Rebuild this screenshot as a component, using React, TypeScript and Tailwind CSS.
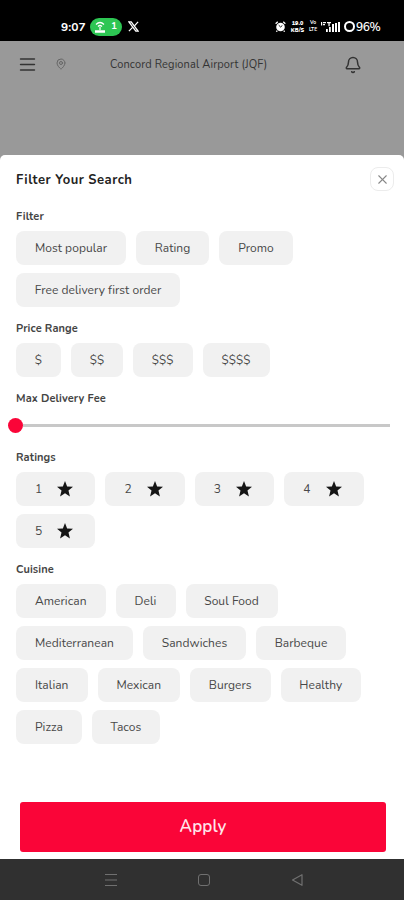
import { Bell, MapPin, Menu, X } from "lucide-react";
import type { ReactNode } from "react";

type Option = { label: string; size: string };

const filters: Option[] = [
  { label: "Most popular", size: "w-[110px]" },
  { label: "Rating", size: "w-[73px]" },
  { label: "Promo", size: "w-[74px]" },
  { label: "Free delivery first order", size: "w-[164px]" },
];

const prices: Option[] = [
  { label: "$", size: "w-[45px]" },
  { label: "$$", size: "w-[52px]" },
  { label: "$$$", size: "w-[59.5px]" },
  { label: "$$$$", size: "w-[67px]" },
];

const cuisines: Option[] = [
  { label: "American", size: "w-[89.5px]" },
  { label: "Deli", size: "w-[60px]" },
  { label: "Soul Food", size: "w-[92px]" },
  { label: "Mediterranean", size: "w-[117px]" },
  { label: "Sandwiches", size: "w-[103px]" },
  { label: "Barbeque", size: "w-[90px]" },
  { label: "Italian", size: "w-[71.5px]" },
  { label: "Mexican", size: "w-[82.5px]" },
  { label: "Burgers", size: "w-[80.5px]" },
  { label: "Healthy", size: "w-[80.5px]" },
  { label: "Pizza", size: "w-[66px]" },
  { label: "Tacos", size: "w-[68px]" },
];

function Star() {
  return (
    <svg viewBox="0 0 24 24" className="size-4 fill-[#151515]">
      <path d="M12 0l3.200 8.300 8.800.5-6.800 5.600 2.200 8.900-7.400-4.900-7.400 4.900 2.200-8.900L0 8.800l8.800-.5z" />
    </svg>
  );
}

function Chip({ size, children }: { size: string; children: ReactNode }) {
  return (
    <button
      className={`${size} flex h-[34px] items-center justify-center rounded-lg bg-[#f1f1f1] text-xs tracking-[0.05px] whitespace-nowrap text-[#484848]`}
    >
      {children}
    </button>
  );
}

function Section({ title, children }: { title: string; children: ReactNode }) {
  return (
    <section>
      <h2 className="flex h-7 items-center pt-px text-[11px] font-bold tracking-[0.1px] text-[#444]">
        {title}
      </h2>
      {children}
    </section>
  );
}

function ChipGroup({ options }: { options: Option[] }) {
  return (
    <div className="flex flex-wrap gap-x-2.5 gap-y-2 pb-2">
      {options.map((o) => (
        <Chip key={o.label} size={o.size}>
          {o.label}
        </Chip>
      ))}
    </div>
  );
}

function StatusBar() {
  return (
    <div className="flex h-[41px] items-center bg-black pt-3 pl-[61px] text-white">
      <span className="w-[29px] text-[12px] font-bold">9:07</span>
      <span className="flex h-[18px] w-8 items-center justify-center gap-1.5 rounded-full bg-[#2dc653] text-[10px] font-bold">
        <svg viewBox="0 0 10 12" className="h-3 w-2.5 fill-none stroke-white">
          <path d="M1 3.5q4-4 8 0M3 5.5q2-2 4 0M5 6v3" strokeWidth="1.2" />
          <path d="M0 10.5h10" strokeWidth="2.5" />
        </svg>
        1
      </span>
      <svg viewBox="0 0 12 12" className="ml-1.5 size-[11px] fill-none stroke-white">
        <path d="M1 1h2.5l7.5 10H8.500z" strokeWidth="1.4" />
        <path d="M11 1L7 5.300M5 7l-4 4" strokeWidth="1.4" />
      </svg>
      <div className="ml-[136px] flex items-center">
        <svg viewBox="0 0 12 12" className="size-[11px]">
          <circle cx="6" cy="6.500" r="4.700" className="fill-white" />
          <path d="M.7 3L3 .9M11.300 3L9 .9M2.500 10.500l-1 1.200M9.500 10.500l1 1.200" stroke="white" strokeWidth="1.400" />
          <path d="M4 4.500l2 2 2-1.500" stroke="black" fill="none" />
        </svg>
        <span className="ml-1 flex w-[15px] flex-col items-center text-[5.5px] leading-[8px] font-black">
          <span className="-mb-px">19.0</span>
          <span>KB/S</span>
        </span>
        <span className="ml-1 flex w-[8px] flex-col items-center text-[5px] leading-[8px] font-bold">
          <span className="-mb-px">Vo</span>
          <span>LTE</span>
        </span>
        <svg viewBox="0 0 20 12" className="ml-1 h-3 w-5 fill-white">
          <path d="M0 1h1.200v3.500H0zM2 1h3v1.200H2zM2 3h2v1.200H2zM6 1h4v1.200H8.700v3H7.400v-3H6zM5 8h1.800v3H5zM8 6h1.800v5H8zM11 3h2v8h-2zM14 2h2v9h-2zM17 1h2v10h-2z" />
        </svg>
        <span className="ml-[3px] size-[11px] rounded-full border-2 border-white" />
        <span className="ml-px text-[12px] font-semibold tracking-[-0.5px]">96%</span>
      </div>
    </div>
  );
}

function Header() {
  return (
    <header className="flex h-[114px] items-start bg-[#999] pt-[14px] pl-[18px] text-[#333]">
      <Menu className="size-[19px] scale-x-110" strokeWidth={1.7} />
      <MapPin className="mt-[3px] ml-[18px] size-3 text-[#666]" strokeWidth={2} />
      <span className="mt-[1px] ml-[43px] w-[158px] text-[11px] leading-[18px] tracking-[0.14px] whitespace-nowrap">
        Concord Regional Airport (JQF)
      </span>
      <Bell className="mt-px ml-[76px] size-[18px]" strokeWidth={2} />
    </header>
  );
}

function NavBar() {
  return (
    <nav className="flex h-[41px] items-center justify-center bg-[#303030] pl-[3px] text-[#707070]">
      <svg viewBox="0 0 12 14" className="h-3.5 w-3 stroke-current">
        <path d="M0 1.500h12M0 7h12M0 12.500h12" strokeWidth="1.200" />
      </svg>
      <span className="mx-[81px] size-3 rounded-[3px] border border-current" />
      <svg viewBox="0 0 12 14" className="h-3.5 w-3 fill-none stroke-current">
        <path d="M11 1.700v10.600L1.500 7z" strokeWidth="1.200" strokeLinejoin="round" />
      </svg>
    </nav>
  );
}

export default function App() {
  return (
    <div className="flex h-[900px] w-[404px] flex-col overflow-hidden bg-[#999] font-['Nunito','Lato',sans-serif]">
      <StatusBar />
      <Header />
      <main className="flex flex-1 flex-col rounded-t-[5px] bg-white px-4">
        <div className="-mr-1.5 flex h-12 items-center justify-between">
          <h1 className="pt-[3px] text-[13px] font-bold tracking-[0.5px] text-[#222]">Filter Your Search</h1>
          <button className="flex size-6 items-center justify-center rounded-lg border border-[#ececec] text-[#888]">
            <X size={15} strokeWidth={1.7} />
          </button>
        </div>
        <Section title="Filter">
          <ChipGroup options={filters} />
        </Section>
        <Section title="Price Range">
          <ChipGroup options={prices} />
        </Section>
        <Section title="Max Delivery Fee">
          <div className="-ml-2 flex h-[31px] items-start pt-[5px]">
            <span className="size-[15px] rounded-full bg-[#fa0538]" />
            <span className="mt-1.5 -mr-0.5 h-[3px] flex-1 bg-[#c8c8c8]" />
          </div>
        </Section>
        <Section title="Ratings">
          <div className="flex flex-wrap gap-x-2.5 gap-y-2 pb-2">
            {[1, 2, 3, 4, 5].map((n) => (
              <Chip key={n} size="w-[79.4px]">
                <span className="mr-[15px]">{n}</span>
                <Star />
                <span className="w-[3px]" />
              </Chip>
            ))}
          </div>
        </Section>
        <Section title="Cuisine">
          <ChipGroup options={cuisines} />
        </Section>
        <button className="mt-auto mr-0.5 mb-[7px] ml-1 h-[50px] rounded-[3px] bg-[#fa0538] text-[17px] font-semibold tracking-[0.1px] text-[#ffe6eb]">
          Apply
        </button>
      </main>
      <NavBar />
    </div>
  );
}
